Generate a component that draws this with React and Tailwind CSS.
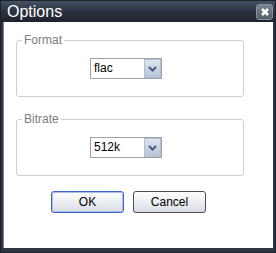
import React, { useState } from 'react'

function Combo({ value }) {
  return (
    <div className="flex h-[21px] w-[72px] border border-[#9ea3a9] bg-white">
      <div className="flex-1 pl-[3px] text-[12px] leading-[19px] text-black">{value}</div>
      <div className="flex w-[17px] items-center justify-center border border-[#b3bfd0] bg-gradient-to-b from-[#dbe3ee] to-[#b9c6d8]">
        <svg width="9" height="6" viewBox="0 0 9 6">
          <path d="M1 1l3.5 3.5L8 1" fill="none" stroke="#4a5a78" strokeWidth="2" />
        </svg>
      </div>
    </div>
  )
}

function Group({ label, children }) {
  return (
    <div className="ml-[12px] h-[57px] w-[228px] rounded-[3px] border border-[#d0d0d0]">
      <div className="-mt-[7px] ml-[5px] w-fit bg-white px-[2px] text-[12px] leading-[13px] text-[#7d7d7d]">
        {label}
      </div>
      <div className="mt-[11px] pl-[73px]">{children}</div>
    </div>
  )
}

export default function App() {
  const [format] = useState('flac')
  const [bitrate] = useState('512k')

  return (
    <div
      className="flex h-[253px] w-[276px] flex-col border border-[#1c232c] bg-[#2c3541]"
      style={{ fontFamily: '"Liberation Sans", Arial, sans-serif' }}
    >
      <div className="flex h-[21px] items-center justify-between bg-gradient-to-b from-[#465162] via-[#2b3340] to-[#1d232c] pl-[6px] pr-[2px]">
        <span className="text-[16px] leading-none text-white">Options</span>
        <div className="flex h-[16px] w-[17px] items-center justify-center rounded-[3px] border border-[#8a939e] bg-gradient-to-b from-[#7b8490] to-[#555e6a]">
          <svg width="10" height="10" viewBox="0 0 10 10">
            <path d="M2 2l6 6M8 2l-6 6" stroke="#fff" strokeWidth="2.6" />
          </svg>
        </div>
      </div>

      <div className="mb-[4px] ml-[2px] mr-[2px] flex-1 border-l border-[#7c8693] bg-white pt-[18px]">
        <Group label="Format">
          <Combo value={format} />
        </Group>
        <div className="h-[22px]" />
        <Group label="Bitrate">
          <Combo value={bitrate} />
        </Group>

        <div className="mt-[15px] flex gap-[9px] pl-[47px]">
          <button className="h-[22px] w-[73px] rounded-[3px] border border-[#3b66c2] bg-gradient-to-b from-white to-[#d8dce3] text-[12px] text-black shadow-[inset_0_0_0_1px_#a9c0ec]">
            OK
          </button>
          <button className="h-[22px] w-[73px] rounded-[3px] border border-[#4a4f57] bg-gradient-to-b from-white to-[#d8dce3] text-[12px] text-black">
            Cancel
          </button>
        </div>
      </div>
    </div>
  )
}
